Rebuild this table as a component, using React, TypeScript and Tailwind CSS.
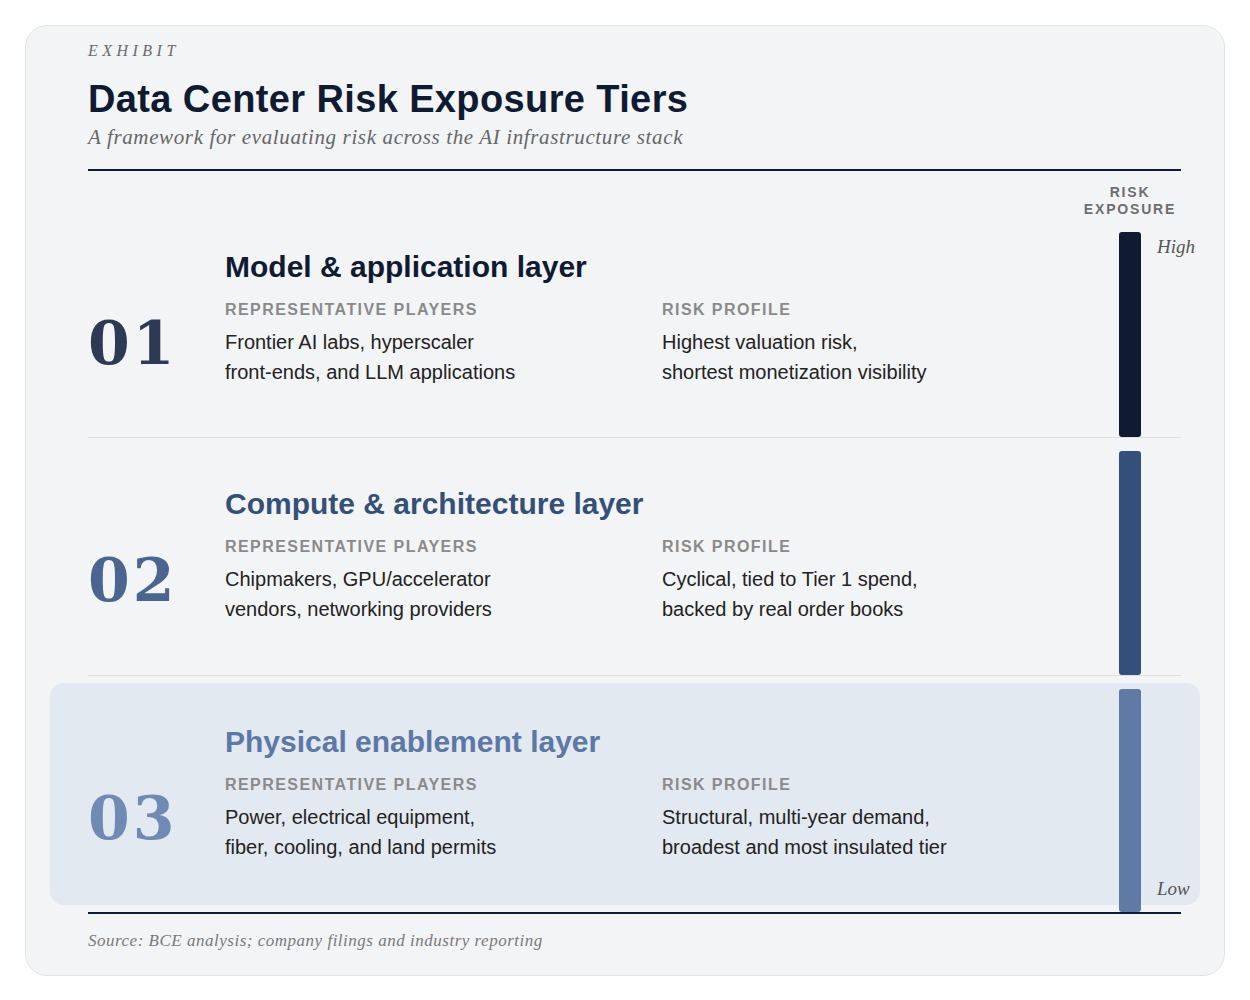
import React from "react";

type Tier = {
  num: string;
  title: string;
  players: string[];
  risk: string[];
  titleCls: string;
  numCls: string;
  barCls: string;
};

const tiers: Tier[] = [
  {
    num: "01",
    title: "Model & application layer",
    players: ["Frontier AI labs, hyperscaler", "front-ends, and LLM applications"],
    risk: ["Highest valuation risk,", "shortest monetization visibility"],
    titleCls: "text-[#0f1a33]",
    numCls: "text-[#2d3a55]",
    barCls: "bg-[#0f1a33]",
  },
  {
    num: "02",
    title: "Compute & architecture layer",
    players: ["Chipmakers, GPU/accelerator", "vendors, networking providers"],
    risk: ["Cyclical, tied to Tier 1 spend,", "backed by real order books"],
    titleCls: "text-[#34507a]",
    numCls: "text-[#4a6690]",
    barCls: "bg-[#34507a]",
  },
  {
    num: "03",
    title: "Physical enablement layer",
    players: ["Power, electrical equipment,", "fiber, cooling, and land permits"],
    risk: ["Structural, multi-year demand,", "broadest and most insulated tier"],
    titleCls: "text-[#5b78a6]",
    numCls: "text-[#6f8bb5]",
    barCls: "bg-[#5f7aa5]",
  },
];

const serif = "font-['Liberation_Serif',Georgia,serif]";

function Column({ label, lines }: { label: string; lines: string[] }) {
  return (
    <div>
      <p className="text-[16px] leading-[20px] font-bold tracking-[0.09em] text-[#8a8a8a] uppercase">
        {label}
      </p>
      <p className="mt-[7px] text-[20px] leading-[30px] text-[#222222]">
        {lines[0]}
        <br />
        {lines[1]}
      </p>
    </div>
  );
}

function TierRow({ tier, index }: { tier: Tier; index: number }) {
  const first = index === 0;
  const last = index === tiers.length - 1;

  let pad = "relative flex flex-1 pt-[48px] pb-[51px]";
  if (first) pad = "relative flex flex-1 pt-[78px] pb-[50px]";
  if (last) pad = "relative flex flex-1 pt-[48px] pb-[50px]";

  return (
    <div className={last ? "relative flex" : "relative flex border-b border-[#e2dfda]"}>
      {last && (
        <div className="absolute -left-[38px] -right-[19px] top-[7px] bottom-[7px] rounded-[14px] bg-[#e3e9f1]" />
      )}

      <div className={pad}>
        <div className="w-[137px] pt-[64px]">
          <span className={`block font-['DejaVu_Serif',serif] text-[60px] leading-none font-bold tracking-[0.05em] ${tier.numCls}`}>
            {tier.num}
          </span>
        </div>
        <div className="flex-1">
          <h2 className={`text-[30px] leading-[36px] font-bold ${tier.titleCls}`}>{tier.title}</h2>
          <div className="mt-[15px] grid grid-cols-[437px_1fr]">
            <Column label="Representative players" lines={tier.players} />
            <Column label="Risk profile" lines={tier.risk} />
          </div>
        </div>
      </div>

      {/* exposure bar */}
      <div className="relative flex w-[102px] flex-col items-center pt-[13px]">
        {first && (
          <p className="mb-[14px] text-center text-[14px] leading-[17px] font-bold tracking-[0.13em] text-[#6e6e6e]">
            RISK
            <br />
            EXPOSURE
          </p>
        )}
        <div className={`relative w-[22px] flex-1 rounded-[3px] ${tier.barCls}`}>
          {first && (
            <span className={`absolute left-[38px] top-[3px] text-[19px] leading-[24px] italic text-[#555555] ${serif}`}>
              High
            </span>
          )}
          {last && (
            <span className={`absolute left-[38px] bottom-[11px] text-[19px] leading-[24px] italic text-[#555555] ${serif}`}>
              Low
            </span>
          )}
        </div>
      </div>
    </div>
  );
}

export default function App() {
  return (
    <div className="min-h-[1000px] bg-white p-[25px] font-['Liberation_Sans',Arial,sans-serif]">
      <div className="rounded-[22px] border border-[#e1e3e6] bg-[#f3f4f6] pl-[62px] pr-[43px] pt-[15px] pb-[22px]">
        {/* Header */}
        <p className={`text-[16px] leading-[20px] italic tracking-[0.28em] text-[#6b6b6b] ${serif}`}>EXHIBIT</p>
        <h1 className="mt-[15px] text-[38px] leading-[46px] font-bold tracking-[0.01em] text-[#0f1a33]">
          Data Center Risk Exposure Tiers
        </h1>
        <p className={`mt-[2px] text-[21px] leading-[26px] italic tracking-[0.03em] text-[#666666] ${serif}`}>
          A framework for evaluating risk across the AI infrastructure stack
        </p>
        <div className="mt-[19px] h-[2px] bg-[#0f1a33]" />

        {/* Tiers */}
        <div>
          {tiers.map((t, i) => (
            <TierRow key={t.num} tier={t} index={i} />
          ))}
        </div>
        <div className="h-[2px] bg-[#0f1a33]" />

        {/* Footer */}
        <p className={`mt-[15px] text-[17px] leading-[24px] italic tracking-[0.03em] text-[#7a7a7a] ${serif}`}>
          Source: BCE analysis; company filings and industry reporting
        </p>
      </div>
    </div>
  );
}
